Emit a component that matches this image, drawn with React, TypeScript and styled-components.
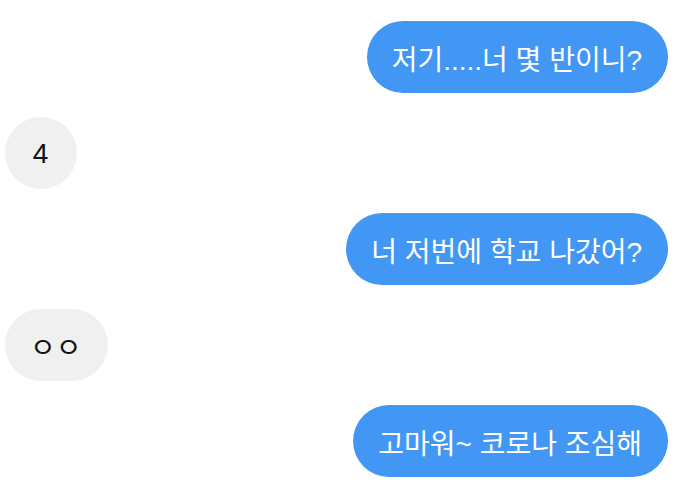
import React from "react";
import styled, { createGlobalStyle } from "styled-components";

const Global = createGlobalStyle`
  html, body { margin: 0; padding: 0; background: #ffffff; }
  body { font-family: "Noto Sans CJK KR", "Noto Sans", sans-serif; }
`;

const Chat = styled.div`
  display: flex;
  flex-direction: column;
  gap: 24px;
  padding: 21px 6px 0 5px;
  width: 674px;
  box-sizing: border-box;
`;

const Row = styled.div<{ $mine: boolean }>`
  display: flex;
  justify-content: ${(p) => (p.$mine ? "flex-end" : "flex-start")};
`;

const Bubble = styled.div<{ $mine: boolean }>`
  height: 72px;
  min-width: 72px;
  box-sizing: border-box;
  padding: 1px 26px 0 25px;
  border-radius: 36px;
  display: flex;
  align-items: center;
  justify-content: center;
  background: ${(p) => (p.$mine ? "#4296f4" : "#f0f0f0")};
  color: ${(p) => (p.$mine ? "#ffffff" : "#111111")};
  font-family: "Liberation Sans", "Noto Sans CJK KR", sans-serif;
  font-size: 28px;
  white-space: nowrap;
`;

const messages: { mine: boolean; text: string }[] = [
  { mine: true, text: "저기.....너 몇 반이니?" },
  { mine: false, text: "4" },
  { mine: true, text: "너 저번에 학교 나갔어?" },
  { mine: false, text: "ㅇㅇ" },
  { mine: true, text: "고마워~ 코로나 조심해" },
];

export default function App() {
  return (
    <>
      <Global />
      <Chat>
        {messages.map((m, i) => (
          <Row key={i} $mine={m.mine}>
            <Bubble $mine={m.mine}>{m.text}</Bubble>
          </Row>
        ))}
      </Chat>
    </>
  );
}
